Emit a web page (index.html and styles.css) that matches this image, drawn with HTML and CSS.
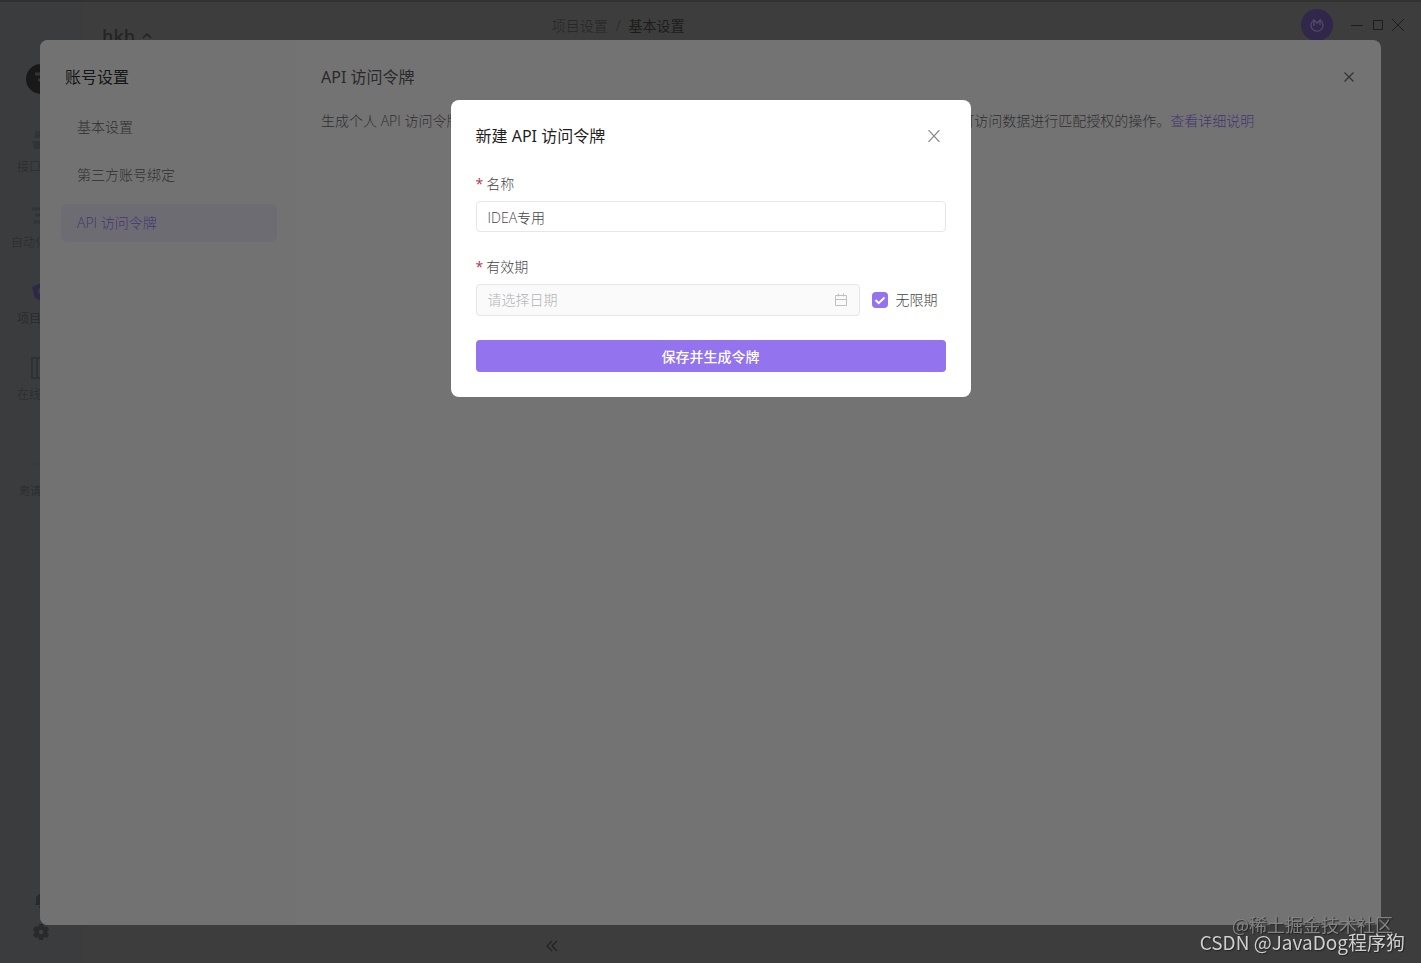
FILE: index.html
```html
<!DOCTYPE html>
<html lang="zh-CN">
<head>
    <meta charset="UTF-8">
    <meta name="viewport" content="width=device-width, initial-scale=1.0">
    <title>API 访问令牌</title>
    <link rel="stylesheet" href="styles.css">
</head>
<body>
    <div class="app">
        <nav class="sidebar">
            <div class="avatar">
                <svg width="30" height="30" viewBox="0 0 30 30"><circle cx="15" cy="15" r="15" fill="#191919"/><path d="M9 10h7M12 16h6" fill="none" stroke="#343434" stroke-width="3"/></svg>
            </div>
            <a class="side-item" href="#">
                <svg width="20" height="24" viewBox="0 0 20 24"><path d="M5 3h12v7H3zM1 13h18v8H3z" fill="#323335"/></svg>
                <span>接口管理</span>
            </a>
            <a class="side-item" href="#">
                <svg width="20" height="24" viewBox="0 0 20 24"><path d="M1 5h18M4 11h12M3 18h16" fill="none" stroke="#323335" stroke-width="3"/></svg>
                <span>自动化测试</span>
            </a>
            <a class="side-item active" href="#">
                <svg width="20" height="24" viewBox="0 0 20 24"><path d="M10 3l9 4-3 11-6 3-6-3L1 7z" fill="#2d2945"/><circle cx="10" cy="11" r="3" fill="#3c3d3f"/></svg>
                <span>项目设置</span>
            </a>
            <a class="side-item" href="#">
                <svg width="20" height="24" viewBox="0 0 20 24"><path d="M1 2h18v20H1zM6 2v20M10 8h6" fill="none" stroke="#303133" stroke-width="2"/></svg>
                <span>在线分享</span>
            </a>
            <a class="side-item invite" href="#">
                <svg width="20" height="24" viewBox="0 0 20 24"><path d="M10 4v16M3 12h14" fill="none" stroke="#38393b" stroke-width="2"/></svg>
                <span>邀请成员</span>
            </a>
            <div class="side-bottom">
                <svg width="14" height="16" viewBox="0 0 14 16"><path d="M2 12V7a5 5 0 0 1 10 0v5l2 1H0zM5 14h4v2H5z" fill="#292a2b"/></svg>
                <svg width="16" height="16" viewBox="0 0 16 16"><path d="M6 0h4l1 3 3-1 2 4-2 2 2 3-2 3-3-1-1 3H6l-1-3-3 1-2-3 2-3-2-2 2-4 3 1z" fill="#292a2b"/><circle cx="8" cy="8" r="2" fill="#434445"/></svg>
            </div>
        </nav>
        <div class="workspace">
            <header class="topbar">
                <div class="project">hkh
                    <svg width="12" height="12" viewBox="0 0 12 12"><path d="M2 8l4-4 4 4" fill="none" stroke="#222" stroke-width="1.5"/></svg>
                </div>
                <div class="crumbs"><span>项目设置</span><span>/</span><strong>基本设置</strong></div>
                <div class="window-tools">
                    <button class="bubble" aria-label="同步"><svg width="16" height="16" viewBox="0 0 16 16"><path d="M5 3a6 6 0 1 0 6 0M5 9V3l3 3 3-3v5" fill="none" stroke="#54476f" stroke-width="1.3"/></svg></button>
                    <button aria-label="最小化"><svg width="13" height="12" viewBox="0 0 13 12"><path d="M0 6.5h12" stroke="#1d1d1d"/></svg></button>
                    <button aria-label="最大化"><svg width="12" height="12" viewBox="0 0 12 12"><path d="M1.5 1.5h9v9h-9z" fill="none" stroke="#1d1d1d"/></svg></button>
                    <button aria-label="关闭窗口"><svg width="12" height="12" viewBox="0 0 12 12"><path d="M0 0l12 12M12 0L0 12" stroke="#1d1d1d"/></svg></button>
                </div>
            </header>
            <footer class="statusbar">
                <button aria-label="收起"><svg width="12" height="12" viewBox="0 0 12 12"><path d="M6 1L1 6l5 5M11 1L6 6l5 5" fill="none" stroke="#222" stroke-width="1.3"/></svg></button>
            </footer>
        </div>
    </div>

    <!-- account settings -->
    <section class="settings">
        <aside class="settings-nav">
            <h2>账号设置</h2>
            <a href="#">基本设置</a>
            <a href="#">第三方账号绑定</a>
            <a class="active" href="#">API 访问令牌</a>
        </aside>
        <main class="settings-body">
            <div class="settings-head">
                <h2>API 访问令牌</h2>
                <button aria-label="关闭"><svg width="10" height="10" viewBox="0 0 10 10"><path d="M.5.5l9 9M9.5.5l-9 9" stroke="#333" stroke-width="1.2"/></svg></button>
            </div>
            <p>生成个人 API 访问令牌后，可通过令牌调用开放API 接口来访问你的数据，令牌会对你账号下的所有项目可访问数据进行匹配授权的操作。<a href="#">查看详细说明</a></p>
        </main>
    </section>

    <!-- new token -->
    <div class="modal" role="dialog" aria-labelledby="modalTitle">
        <div class="modal-head">
            <h3 id="modalTitle">新建 API 访问令牌</h3>
            <button aria-label="关闭"><svg width="12" height="12" viewBox="0 0 12 12"><path d="M.5 0l11 12M11.5 0L.5 12" stroke="#8c8c8c" stroke-width="1.2"/></svg></button>
        </div>
        <form>
            <label class="field-label" for="tokenName"><span>*</span>名称</label>
            <input class="text-input" type="text" id="tokenName" value="IDEA专用">

            <label class="field-label" for="expireDate"><span>*</span>有效期</label>
            <div class="expire-row">
                <div class="date-box">
                    <input type="text" id="expireDate" placeholder="请选择日期" disabled>
                    <svg width="14" height="14" viewBox="0 0 14 14"><path d="M1.5 2.5h11v10h-11zM1.5 6.5h11M4.5 .5v3M9.5 .5v3" fill="none" stroke="#bfbfbf"/></svg>
                </div>
                <label class="forever"><input type="checkbox" checked>无限期</label>
            </div>
            <button class="submit" type="submit">保存并生成令牌</button>
        </form>
    </div>

    <div class="watermark">
        <span class="mark-back">@稀土掘金技术社区</span>
        <span class="mark-front">CSDN @JavaDog程序狗</span>
    </div>
</body>
</html>
```
FILE: styles.css
```css
* {
    box-sizing: border-box;
}
body {
    margin: 0;
    font-family: "Open Sans", "Noto Sans CJK SC", sans-serif;
    font-size: 14px;
    font-weight: 300;
    line-height: 22px;
    background-color: #3d3d3d;
    overflow: hidden;
}
h2, h3 {
    margin: 0;
    font-size: 16px;
    font-weight: 400;
    line-height: 24px;
}
a {
    text-decoration: none;
}
svg {
    display: block;
    flex: none;
}
button {
    padding: 0;
    border: none;
    background: none;
    font-family: inherit;
    cursor: pointer;
}
.app {
    display: flex;
    height: 100vh;
    border-top: 2px solid #323232;
}
.sidebar {
    display: flex;
    flex-direction: column;
    align-items: center;
    width: 82px;
    padding-top: 62px;
    background-color: #3b3c3e;
}
.avatar {
    width: 28px;
    margin-bottom: 34px;
    display: flex;
    justify-content: center;
}
.side-item {
    display: flex;
    flex-direction: column;
    align-items: center;
    gap: 4px;
    height: 76px;
    font-size: 12px;
    color: #292a2b;
    white-space: nowrap;
}
.side-item svg {
    width: 20px;
}
.side-item.active {
    color: #232229;
}
.side-item.invite {
    margin-top: 20px;
    font-size: 11px;
}
.side-bottom {
    display: flex;
    flex-direction: column;
    align-items: center;
    gap: 16px;
    margin-top: auto;
    padding-bottom: 23px;
}
.workspace {
    flex: 1;
    display: flex;
    flex-direction: column;
    justify-content: space-between;
}
.topbar {
    display: flex;
    justify-content: space-between;
    height: 46px;
    padding: 0 17px 0 20px;
}
.project {
    display: flex;
    align-items: center;
    gap: 6px;
    flex: 5;
    padding-top: 22px;
    font-size: 18px;
    font-weight: 600;
    color: #252525;
}
.crumbs {
    display: flex;
    gap: 8px;
    padding-top: 13px;
    color: #252525;
}
.crumbs strong {
    font-weight: 400;
    color: #1c1c1c;
}
.window-tools {
    display: flex;
    align-items: center;
    justify-content: flex-end;
    flex: 8;
    gap: 8px;
}
.bubble {
    display: flex;
    align-items: center;
    justify-content: center;
    width: 32px;
    height: 32px;
    margin-right: 10px;
    border-radius: 50%;
    background-color: #30274a;
}
.statusbar {
    padding: 0 0 5px 464px;
}
.settings {
    position: fixed;
    top: 40px;
    right: 40px;
    bottom: 38px;
    left: 40px;
    display: flex;
    border-radius: 8px;
    background-color: #737373;
    color: #2f2f2f;
}
.settings-nav {
    display: flex;
    flex-direction: column;
    gap: 10px;
    width: 256px;
    padding: 25px 19px 25px 21px;
    border-radius: 8px 0 0 8px;
    background-color: #727272;
}
.settings-nav h2 {
    margin-bottom: 9px;
    padding-left: 4px;
    color: #151515;
}
.settings-nav a {
    padding: 8px 16px;
    border-radius: 6px;
    color: #2f2f2f;
}
.settings-nav a.active {
    background-color: #6e6c73;
    color: #433570;
}
.settings-body {
    flex: 1;
    padding: 25px;
}
.settings-head {
    display: flex;
    align-items: center;
    justify-content: space-between;
    padding-right: 2px;
}
.settings-head h2 {
    font-family: "Noto Sans", "Noto Sans CJK SC", sans-serif;
    color: #2a2a2a;
}
.settings-body p {
    margin: 21px 0 0;
    white-space: nowrap;
}
.settings-body p a {
    color: #433570;
}
.modal {
    position: fixed;
    top: 100px;
    left: 50%;
    width: 520px;
    margin-left: -260px;
    padding: 24px 25px 25px;
    border-radius: 8px;
    background-color: #fff;
    color: #444;
}
.modal-head {
    display: flex;
    align-items: center;
    justify-content: space-between;
    margin-bottom: 25px;
    padding-right: 6px;
}
.modal-head h3 {
    font-family: "Noto Sans", "Noto Sans CJK SC", sans-serif;
    color: #1f1f1f;
}
.field-label {
    display: block;
    margin-bottom: 6px;
}
.field-label span {
    margin-right: 3px;
    font-weight: 400;
    color: #b0375c;
}
.text-input {
    display: block;
    width: 100%;
    height: 31px;
    margin-bottom: 24px;
    padding: 0 11px;
    border: 1px solid #e6e6e6;
    border-radius: 4px;
    font: inherit;
    color: #444;
}
.expire-row {
    display: flex;
    align-items: center;
    gap: 12px;
    margin-bottom: 24px;
}
.date-box {
    display: flex;
    align-items: center;
    flex: 1;
    height: 32px;
    padding: 0 11px;
    border: 1px solid #e6e6e6;
    border-radius: 4px;
    background-color: #fafafa;
}
.date-box input {
    flex: 1;
    min-width: 0;
    padding: 0;
    border: none;
    background: none;
    font: inherit;
}
.date-box input::placeholder {
    color: #b3b3b3;
}
.forever {
    display: flex;
    align-items: center;
    gap: 8px;
    padding-right: 8px;
}
.forever input {
    appearance: none;
    width: 16px;
    height: 16px;
    margin: 0;
    border-radius: 4px;
    background: #9373ee url("data:image/svg+xml,%3Csvg xmlns='http://www.w3.org/2000/svg' viewBox='0 0 16 16'%3E%3Cpath d='M3.5 8l3.2 3.2L12.5 5.5' fill='none' stroke='%23fff' stroke-width='2'/%3E%3C/svg%3E");
}
.submit {
    display: block;
    width: 100%;
    height: 32px;
    border-radius: 4px;
    background-color: #9373ee;
    font-size: 14px;
    font-weight: 500;
    color: #fff;
}
.watermark {
    position: fixed;
    right: 16px;
    bottom: 11px;
    display: flex;
    flex-direction: column;
    align-items: flex-end;
    font-family: "Noto Sans CJK SC", sans-serif;
    font-weight: 400;
    line-height: 16px;
    white-space: nowrap;
    text-shadow: 1px 1px 1px #222;
}
.mark-back {
    padding-right: 12px;
    font-size: 18px;
    color: #828282;
}
.mark-front {
    font-size: 19px;
    line-height: 20px;
    color: #cfcfcf;
}
```
